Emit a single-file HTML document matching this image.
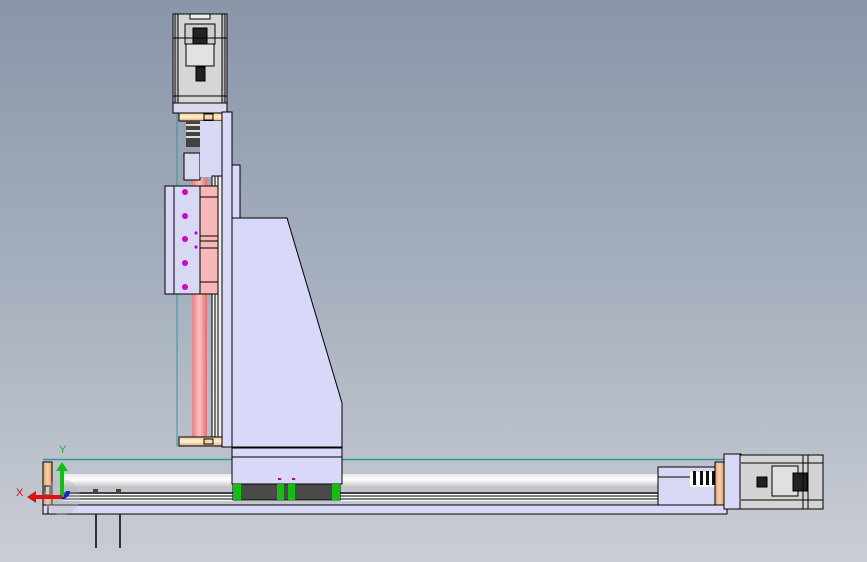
<!DOCTYPE html><html><head><style>body{margin:0}svg{display:block}</style></head><body>
<svg width="867" height="562" viewBox="0 0 867 562" xmlns="http://www.w3.org/2000/svg" font-family="Liberation Sans, sans-serif">
<defs>
<linearGradient id="bg" x1="0" y1="0" x2="0" y2="1"><stop offset="0" stop-color="#8996a8"/><stop offset="0.5" stop-color="#a6afbd"/><stop offset="1" stop-color="#c9cdd5"/></linearGradient>
<linearGradient id="rod" x1="0" y1="0" x2="0" y2="1"><stop offset="0" stop-color="#e8e8e8"/><stop offset="0.4" stop-color="#ffffff"/><stop offset="1" stop-color="#bdbdbd"/></linearGradient>
<linearGradient id="pink" x1="0" y1="0" x2="1" y2="0"><stop offset="0" stop-color="#e88080"/><stop offset="0.5" stop-color="#ffc0c0"/><stop offset="1" stop-color="#e07070"/></linearGradient>
<linearGradient id="cup" x1="0" y1="0" x2="0" y2="1"><stop offset="0" stop-color="#f0c890"/><stop offset="0.5" stop-color="#fff4d8"/><stop offset="1" stop-color="#e0a870"/></linearGradient>
<linearGradient id="cupv" x1="0" y1="0" x2="1" y2="0"><stop offset="0" stop-color="#e0a070"/><stop offset="0.5" stop-color="#f8d0a8"/><stop offset="1" stop-color="#e0a070"/></linearGradient>
</defs>
<rect width="867" height="562" fill="url(#bg)"/>
<g stroke="#000" stroke-width="1">
<!-- vertical pink rod -->
<rect x="192" y="178" width="15" height="268" fill="url(#pink)" stroke="none"/>
<line x1="177" y1="113" x2="177" y2="447" stroke="#2a9a9a"/>
<!-- top motor -->
<rect x="173" y="14" width="54" height="89" fill="#d6d6d6"/>
<rect x="175" y="14" width="3" height="89" fill="#bbb"/><rect x="222" y="14" width="3" height="89" fill="#bbb"/>
<rect x="190" y="14" width="20" height="5" fill="#eee"/>
<rect x="185" y="24" width="30" height="20" fill="#ccc"/>
<rect x="193" y="28" width="14" height="16" fill="#222"/>
<rect x="186" y="44" width="28" height="22" fill="#e2e2e2"/>
<rect x="196" y="67" width="9" height="14" fill="#222"/>
<line x1="173" y1="38" x2="227" y2="38"/><line x1="173" y1="96" x2="227" y2="96"/>
<rect x="173" y="103" width="54" height="10" fill="#d8d8ee"/>
<!-- coupling top -->
<rect x="179" y="113" width="43" height="8" fill="url(#cup)"/>
<rect x="204" y="114" width="9" height="6" fill="#f8d8a8"/>
<rect x="186" y="121" width="14" height="26" fill="#444" stroke="none"/>
<rect x="186" y="124" width="14" height="2" fill="#ddd" stroke="none"/><rect x="186" y="130" width="14" height="2" fill="#ddd" stroke="none"/><rect x="186" y="136" width="14" height="2" fill="#ddd" stroke="none"/>
<rect x="184" y="153" width="16" height="27" fill="#d8d8ee"/>
<rect x="200" y="121" width="22" height="56" fill="#d8d8f4" stroke="none"/>
<!-- column -->
<rect x="222" y="112" width="10" height="335" fill="#d8d8f8"/>
<rect x="232" y="165" width="8" height="282" fill="#d8d8f8"/>
<rect x="212" y="176" width="10" height="270" fill="#eee"/>
<line x1="215" y1="176" x2="215" y2="446"/><line x1="218" y1="176" x2="218" y2="446"/>
<!-- big plate -->
<path d="M232 218 H287 L342 403 V447 H232 Z" fill="#d8d8f8"/>
<!-- carriage -->
<rect x="165" y="186" width="35" height="108" fill="#d8d8f4"/>
<line x1="174" y1="186" x2="174" y2="294"/>
<rect x="200" y="186" width="18" height="108" fill="#f8b8b8"/>
<line x1="200" y1="236" x2="218" y2="236"/><line x1="200" y1="241" x2="218" y2="241"/><line x1="200" y1="248" x2="218" y2="248"/>
<line x1="200" y1="197" x2="218" y2="197"/><line x1="200" y1="282" x2="218" y2="282"/>
<g fill="#d000d0" stroke="none"><circle cx="185" cy="192" r="3"/><circle cx="185" cy="216" r="3"/><circle cx="185" cy="239" r="3"/><circle cx="185" cy="263" r="3"/><circle cx="185" cy="287" r="3"/><circle cx="196" cy="233" r="1.6"/><circle cx="196" cy="247" r="1.6"/></g>
<!-- bottom coupling vertical -->
<rect x="179" y="437" width="43" height="9" fill="url(#cup)"/>
<rect x="204" y="439" width="9" height="5" fill="#f8d8a8"/>
<!-- horizontal axis -->
<line x1="43" y1="459.5" x2="735" y2="459.5" stroke="#2a9a9a" stroke-width="1.5"/>
<rect x="62" y="474" width="600" height="14" fill="url(#rod)" stroke="none"/>
<rect x="62" y="492" width="600" height="9" fill="#fff" stroke="none"/>
<line x1="62" y1="493" x2="662" y2="493" stroke-width="1.5"/><line x1="62" y1="496" x2="662" y2="496"/><line x1="62" y1="499" x2="662" y2="499"/>
<rect x="43" y="505" width="684" height="9" fill="#d8d8f8"/>
<line x1="48" y1="505" x2="48" y2="514"/>
<rect x="43" y="462" width="9" height="43" fill="url(#cupv)"/>
<rect x="45" y="486" width="5" height="9" fill="#ddd"/>
<rect x="93" y="489" width="5" height="4" fill="#444" stroke="none"/><rect x="116" y="489" width="5" height="4" fill="#444" stroke="none"/>
<line x1="96" y1="514" x2="96" y2="548" stroke="#333" stroke-width="2"/><line x1="120" y1="514" x2="120" y2="548" stroke="#333" stroke-width="2"/>
<!-- column base -->
<rect x="232" y="448" width="110" height="36" fill="#d8d8f8"/>
<line x1="232" y1="457" x2="342" y2="457"/>
<rect x="233" y="484" width="107" height="16" fill="#4a4a4a"/>
<g fill="#10c010" stroke="none"><rect x="233" y="484" width="8" height="16"/><rect x="277" y="484" width="7" height="16"/><rect x="288" y="484" width="7" height="16"/><rect x="332" y="484" width="8" height="16"/></g>
<g fill="#b000b0" stroke="none"><rect x="278" y="478" width="3" height="2"/><rect x="292" y="478" width="3" height="2"/></g>
<!-- right end -->
<rect x="658" y="467" width="62" height="38" fill="#d8d8f4"/>
<line x1="658" y1="477" x2="690" y2="477"/>
<rect x="690" y="472" width="26" height="15" fill="#fff" stroke="none"/>
<g fill="#111" stroke="none"><rect x="693" y="471" width="3" height="14"/><rect x="700" y="471" width="3" height="14"/><rect x="706" y="471" width="3" height="14"/><rect x="712" y="471" width="3" height="14"/></g>
<rect x="715" y="462" width="9" height="43" fill="url(#cupv)"/>
<rect x="724" y="454" width="17" height="55" fill="#d8d8f4"/>
<rect x="740" y="455" width="83" height="54" fill="#d4d4d4"/>
<line x1="741" y1="463" x2="823" y2="463"/><line x1="741" y1="500" x2="823" y2="500"/>
<rect x="772" y="466" width="26" height="30" fill="#e0e0e0"/>
<rect x="757" y="477" width="10" height="10" fill="#222"/>
<rect x="793" y="473" width="14" height="18" fill="#222"/>
<line x1="803" y1="455" x2="803" y2="509"/><line x1="808" y1="455" x2="808" y2="509"/>
</g>
<!-- triad -->
<circle cx="62" cy="497" r="18" fill="#b8b8b8" opacity="0.35"/>
<path d="M62 497 A 6 6 0 0 0 68 491" stroke="#1020e0" stroke-width="4" fill="none"/>
<line x1="62" y1="497" x2="62" y2="470" stroke="#10c010" stroke-width="4"/>
<path d="M56 471 L62 462 L68 471 Z" fill="#10c010"/>
<line x1="62" y1="497" x2="35" y2="497" stroke="#e01010" stroke-width="4"/>
<path d="M36 491 L27 497 L36 503 Z" fill="#e01010"/>
<text x="59" y="453" font-size="11" fill="#10c010">Y</text>
<text x="16" y="496" font-size="11" fill="#e01010">X</text>
</svg>
</body></html>
